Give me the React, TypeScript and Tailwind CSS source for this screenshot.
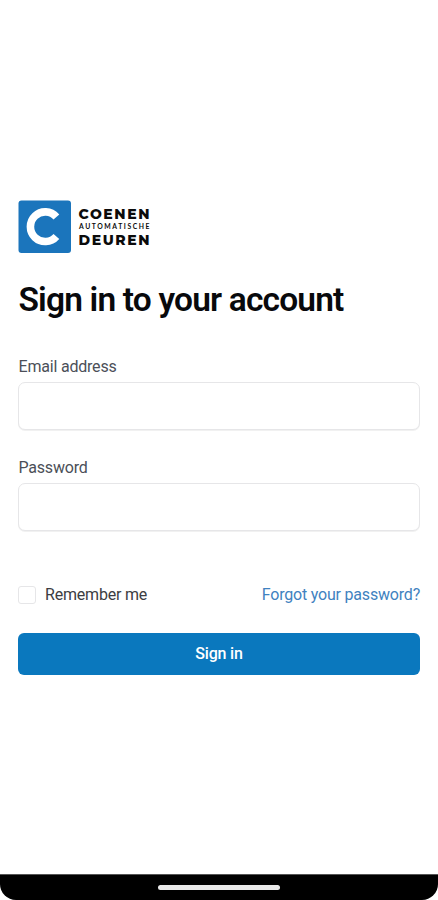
import React, { useState } from 'react';

function Logo() {
  return (
    <svg
      viewBox="0 0 134 54"
      className="block h-[54px] w-[134px]"
      role="img"
      aria-label="Coenen Automatische Deuren"
    >
      <rect x="0.5" y="0.5" width="52.5" height="52.5" rx="3" fill="#1b75bc" />
      <path d="M38.4 17A14.8 14.8 0 1 0 38.4 36.4" fill="none" stroke="#fff" strokeWidth="7.6" />
      <g fill="#0b0b0b" fontFamily="Montserrat, 'Open Sans', sans-serif">
        <text x="60.5" y="18.8" fontSize="14" fontWeight="800" textLength="71" lengthAdjust="spacing">
          COENEN
        </text>
        <text x="61" y="29.3" fontSize="6.8" fontWeight="700" fontFamily="Lato, sans-serif" textLength="70.5" lengthAdjust="spacing">
          AUTOMATISCHE
        </text>
        <text x="60.5" y="44.8" fontSize="14" fontWeight="800" textLength="71" lengthAdjust="spacing">
          DEUREN
        </text>
      </g>
    </svg>
  );
}

interface FieldProps {
  id: string;
  label: string;
  type: string;
  value: string;
  onChange: (value: string) => void;
}

function Field({ id, label, type, value, onChange }: FieldProps) {
  return (
    <div>
      <label htmlFor={id} className="block pl-[0.5px] text-[16px] leading-5 tracking-[-0.2px] text-[#4b4f58]">
        {label}
      </label>
      <input
        id={id}
        type={type}
        value={value}
        onChange={(e) => onChange(e.target.value)}
        className="mt-[5px] block h-12 w-full rounded-[7px] border border-[#e6e6e8] bg-white px-3 shadow-[0_1px_0_#f1f1f1] outline-none"
      />
    </div>
  );
}

export default function App() {
  const [email, setEmail] = useState('');
  const [password, setPassword] = useState('');
  const [remember, setRemember] = useState(false);

  const handleSubmit = (e: React.FormEvent) => {
    e.preventDefault();
  };

  return (
    <div className="flex h-[900px] flex-col bg-white font-[Roboto,sans-serif]">
      <main className="flex-1 px-[18px] pt-[200px]">
        <Logo />
        <h1 className="mt-[26px] pl-[0.5px] text-[33.5px] font-semibold leading-10 tracking-[-0.83px] whitespace-nowrap text-[#08090c]">
          Sign in to your account
        </h1>

        <form onSubmit={handleSubmit} className="mt-[37px]">
          <div className="space-y-[27.5px]">
            <Field id="email" label="Email address" type="email" value={email} onChange={setEmail} />
            <Field id="password" label="Password" type="password" value={password} onChange={setPassword} />
          </div>

          <div className="mt-[54px] flex items-center justify-between text-[16px] leading-5">
            <label className="flex items-center tracking-[-0.2px] text-[#3c3d42]">
              <input
                type="checkbox"
                checked={remember}
                onChange={(e) => setRemember(e.target.checked)}
                className="mr-[9px] size-[18px] appearance-none rounded-[3px] border border-[#e6e6e8] bg-white checked:bg-[#0a78be]"
              />
              Remember me
            </label>
            <a href="#" className="tracking-[-0.2px] text-[#3f82c0]">
              Forgot your password?
            </a>
          </div>

          <button
            type="submit"
            className="mt-7 block h-[42px] w-full rounded-md bg-[#0a78be] text-[16px] font-medium tracking-[-0.2px] text-white"
          >
            Sign in
          </button>
        </form>
      </main>

      <div className="bg-white">
        <div className="flex h-[26px] justify-center rounded-b-[16px] border-t border-[#555] bg-black pt-[10px]">
          <div className="h-[5px] w-[122px] rounded-full bg-[#e9e9e9]" />
        </div>
      </div>
    </div>
  );
}
